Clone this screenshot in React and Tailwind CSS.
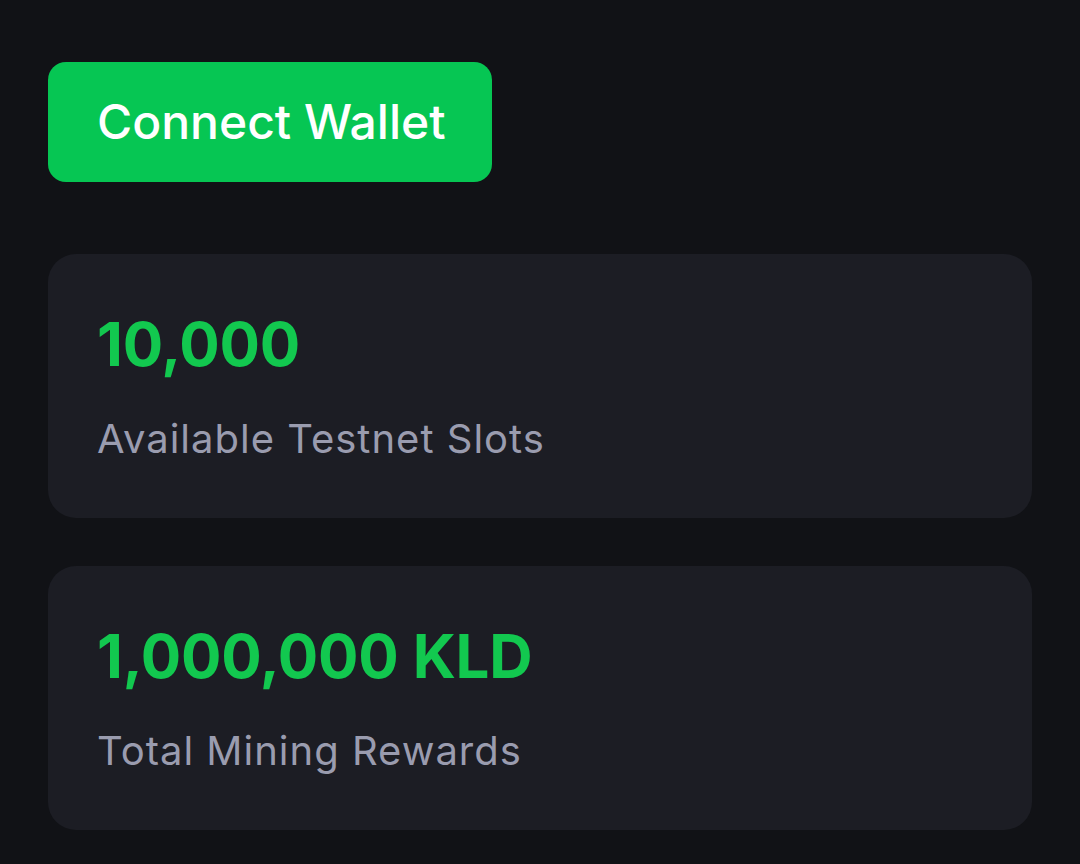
export default function App() {
  return (
    <div className="min-h-[864px] w-[1080px] bg-[#111216] px-12 pt-[62px]" style={{ fontFamily: "Inter, 'Noto Sans', sans-serif" }}>
      <button className="flex h-[120px] w-[444px] items-center rounded-[18px] bg-[#06c653] pl-[49px] text-[48px] font-medium text-white">
        Connect Wallet
      </button>
      <div className="mt-[72px] flex flex-col gap-12">
        <div className="flex h-[264px] flex-col rounded-[28px] bg-[#1c1d24] px-[49px] pt-[54px]">
          <div className="text-[60px] font-bold leading-[72px] tracking-[-0.2px] text-[#12c84f]">10,000</div>
          <div className="mt-[35px] text-[40px] leading-[48px] tracking-[1px] text-[#9a9caf]">Available Testnet Slots</div>
        </div>
        <div className="flex h-[264px] flex-col rounded-[28px] bg-[#1c1d24] px-[49px] pt-[54px]">
          <div className="text-[60px] font-bold leading-[72px] tracking-[-0.2px] text-[#12c84f]">1,000,000 KLD</div>
          <div className="mt-[35px] text-[40px] leading-[48px] tracking-[1px] text-[#9a9caf]">Total Mining Rewards</div>
        </div>
      </div>
    </div>
  );
}
